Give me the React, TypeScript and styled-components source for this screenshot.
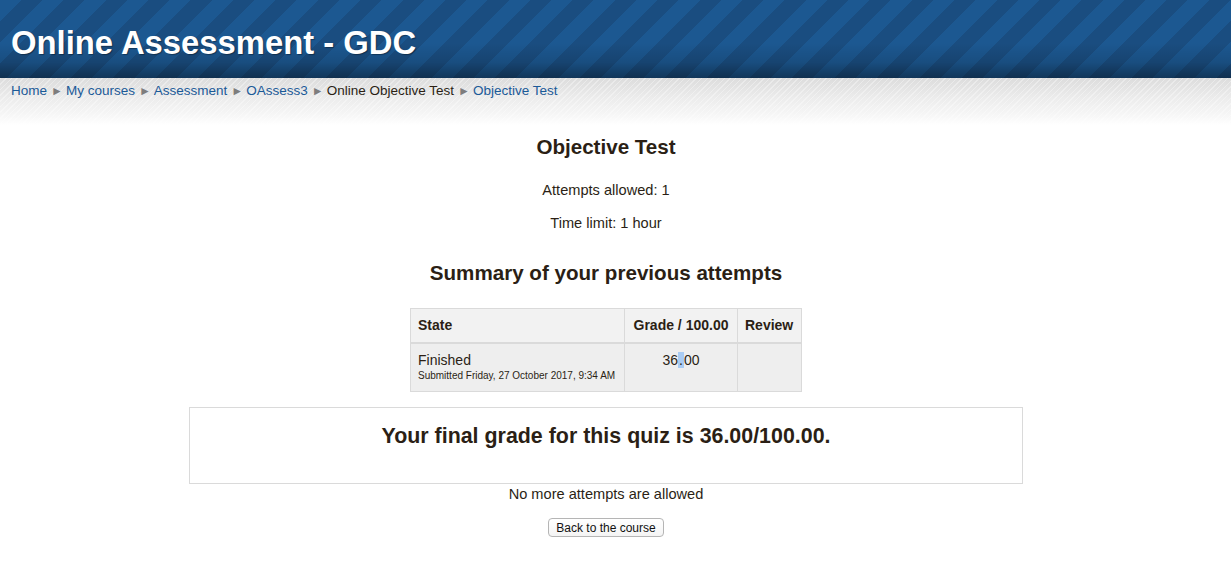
import styled, { createGlobalStyle } from 'styled-components';

const GlobalStyle = createGlobalStyle`
  body {
    margin: 0;
    background: #fff;
    font-family: 'Liberation Sans', Arial, sans-serif;
    color: #2b1f15;
  }
`;

const Header = styled.header`
  height: 78px;
  display: flex;
  align-items: center;
  padding: 8px 11px 0;
  box-sizing: border-box;
  background:
    linear-gradient(to bottom, rgba(0, 0, 0, 0) 55%, rgba(0, 0, 0, 0.12) 80%, rgba(0, 0, 0, 0.38) 100%),
    repeating-linear-gradient(135deg, #1c5891 0, #1c5891 15px, #1a4d80 15px, #1a4d80 30px);
`;

const SiteTitle = styled.h1`
  margin: 0;
  font-size: 32.8px;
  font-weight: bold;
  color: #fff;
  text-shadow: 1px 1px 1px rgba(0, 0, 0, 0.35);
`;

const CrumbBar = styled.nav`
  height: 47px;
  padding: 3px 11px 0;
  box-sizing: border-box;
  font-size: 13.5px;
  line-height: 20px;
  background:
    repeating-linear-gradient(135deg, rgba(255, 255, 255, 0.35) 0, rgba(255, 255, 255, 0.35) 1px, transparent 1px, transparent 4px),
    linear-gradient(to bottom, #dcdcdc 0, #ececec 20px, #f7f7f7 38px, #fff 47px);
`;

const Crumb = styled.a<{ $current?: boolean }>`
  color: ${(p) => (p.$current ? '#2b1f15' : '#1b5a98')};
  text-decoration: none;
`;

const Sep = styled.span`
  color: #7d7d7d;
  font-size: 12px;
  margin: 0 3px 0 4px;
`;

const Main = styled.main`
  width: 1212px;
  display: flex;
  flex-direction: column;
  align-items: center;
  text-align: center;
`;

const Heading = styled.h2<{ $top: number }>`
  margin: ${(p) => p.$top}px 0 0;
  font-size: 20.6px;
  line-height: 24px;
  font-weight: bold;
`;

const Info = styled.p<{ $top: number }>`
  margin: ${(p) => p.$top}px 0 0;
  font-size: 14.6px;
  line-height: 20px;
`;

const Table = styled.table`
  margin-top: 23px;
  border-collapse: collapse;
  font-size: 14px;
  text-align: left;
`;

const Th = styled.th<{ $w: number; $center?: boolean }>`
  width: ${(p) => p.$w}px;
  box-sizing: border-box;
  height: 34px;
  padding: 0 7px;
  background: #f2f2f2;
  border: 1px solid #dadada;
  border-bottom-width: 2px;
  font-weight: bold;
  text-align: ${(p) => (p.$center ? 'center' : 'left')};
`;

const Td = styled.td<{ $center?: boolean }>`
  height: 49px;
  padding: 8px 7px 6px;
  box-sizing: border-box;
  vertical-align: top;
  background: #eeeeee;
  border: 1px solid #dadada;
  line-height: 17px;
  text-align: ${(p) => (p.$center ? 'center' : 'left')};
`;

const Small = styled.div`
  font-size: 10px;
  line-height: 13px;
`;

const Selected = styled.span`
  background: #a9cbf3;
  padding: 0 1px;
`;

const GradeBox = styled.div`
  margin-top: 15px;
  width: 834px;
  height: 77px;
  box-sizing: border-box;
  border: 1px solid #dadada;
  padding-top: 16px;
  font-size: 21.4px;
  line-height: 24px;
  font-weight: bold;
`;

const Button = styled.button`
  margin-top: 14px;
  height: 19px;
  padding: 0 7px;
  font-family: 'Liberation Sans', Arial, sans-serif;
  font-size: 12px;
  color: #111;
  background: linear-gradient(#ffffff, #f4f4f4);
  border: 1px solid #b5b5b5;
  border-radius: 4px;
`;

const crumbs = ['Home', 'My courses', 'Assessment', 'OAssess3'];

export default function App() {
  return (
    <>
      <GlobalStyle />
      <Header>
        <SiteTitle>Online Assessment - GDC</SiteTitle>
      </Header>
      <CrumbBar>
        {crumbs.map((c) => (
          <span key={c}>
            <Crumb href="#">{c}</Crumb>
            <Sep>►</Sep>
          </span>
        ))}
        <Crumb $current>Online Objective Test</Crumb>
        <Sep>►</Sep>
        <Crumb href="#">Objective Test</Crumb>
      </CrumbBar>
      <Main>
        <Heading $top={10}>Objective Test</Heading>
        <Info $top={21}>Attempts allowed: 1</Info>
        <Info $top={13}>Time limit: 1 hour</Info>
        <Heading $top={28}>Summary of your previous attempts</Heading>
        <Table>
          <thead>
            <tr>
              <Th $w={214}>State</Th>
              <Th $w={113} $center>Grade / 100.00</Th>
              <Th $w={64}>Review</Th>
            </tr>
          </thead>
          <tbody>
            <tr>
              <Td>
                Finished
                <Small>Submitted Friday, 27 October 2017, 9:34 AM</Small>
              </Td>
              <Td $center>
                36<Selected>.</Selected>00
              </Td>
              <Td />
            </tr>
          </tbody>
        </Table>
        <GradeBox>Your final grade for this quiz is 36.00/100.00.</GradeBox>
        <Info $top={0}>No more attempts are allowed</Info>
        <Button>Back to the course</Button>
      </Main>
    </>
  );
}
